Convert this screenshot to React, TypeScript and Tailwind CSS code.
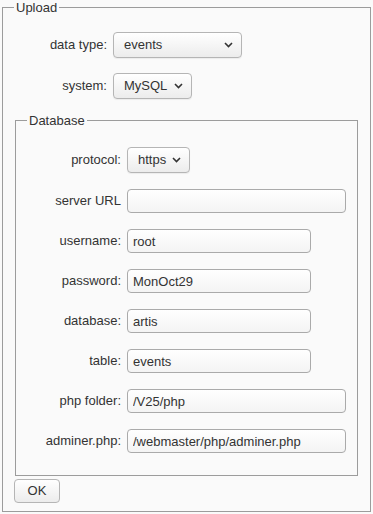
import React from 'react';

const font = "font-['Liberation_Sans',Arial,sans-serif]";

function Chevron() {
    return (
        <svg width="9" height="6" viewBox="0 0 9 6" className="shrink-0">
            <polyline points="1,1 4.5,4.5 8,1" fill="none" stroke="#333" strokeWidth="1.6" />
        </svg>
    );
}

function Select({value, w}: {value: string; w: string}) {
    return (
        <div className={`${w} h-[26px] flex items-center justify-between pl-[10px] pr-[8px] border border-[#b5b5b5] rounded-[4px] bg-gradient-to-b from-white to-[#ececec] text-[#333] text-[13px] shadow-[0_1px_1px_rgba(0,0,0,0.06)]`}>
            <span>{value}</span>
            <Chevron />
        </div>
    );
}

function Field({value, w}: {value: string; w: string}) {
    return (
        <input
            readOnly
            defaultValue={value}
            className={`${w} h-[24px] px-[5px] border border-[#aaa] rounded-[4px] bg-gradient-to-b from-white to-[#f4f4f4] text-[#333] text-[13px] ${font} outline-none`}
        />
    );
}

const rows: [string, string, string][] = [
    ['server URL', '', 'w-[219px]'],
    ['username:', 'root', 'w-[184px]'],
    ['password:', 'MonOct29', 'w-[184px]'],
    ['database:', 'artis', 'w-[184px]'],
    ['table:', 'events', 'w-[184px]'],
    ['php folder:', '/V25/php', 'w-[219px]'],
    ['adminer.php:', '/webmaster/php/adminer.php', 'w-[219px]'],
];

export default function App() {
    return (
        <div className={`w-[373px] h-[514px] bg-[#fafafa] p-[2px] ${font} text-[13px] text-[#333]`}>
            <fieldset className="h-[510px] border border-[#9c9c9c] px-[11px] pb-[8px]">
                <legend className="px-[2px] leading-[11px]">Upload</legend>

                <div className="grid grid-cols-[93px_auto] gap-x-[6px] gap-y-[15px] items-center pt-[19px]">
                    <span className="text-right">data type:</span>
                    <Select value="events" w="w-[129px]" />
                    <span className="text-right">system:</span>
                    <Select value="MySQL" w="w-[79px]" />
                </div>

                <fieldset className="mt-[16px] mx-[1px] border border-[#9c9c9c] px-[11px] pb-[22px]">
                    <legend className="px-[2px] leading-[11px]">Database</legend>
                    <div className="grid grid-cols-[94px_auto] gap-x-[6px] gap-y-[16px] items-center pt-[21px]">
                        <span className="text-right">protocol:</span>
                        <Select value="https" w="w-[63px]" />
                        {rows.map(([label, value, w]) => (
                            <React.Fragment key={label}>
                                <span className="text-right">{label}</span>
                                <Field value={value} w={w} />
                            </React.Fragment>
                        ))}
                    </div>
                </fieldset>

                <button className="mt-[3px] w-[46px] h-[24px] border border-[#b5b5b5] rounded-[4px] bg-gradient-to-b from-white to-[#ececec] text-[#333] text-[13px]">
                    OK
                </button>
            </fieldset>
        </div>
    );
}
